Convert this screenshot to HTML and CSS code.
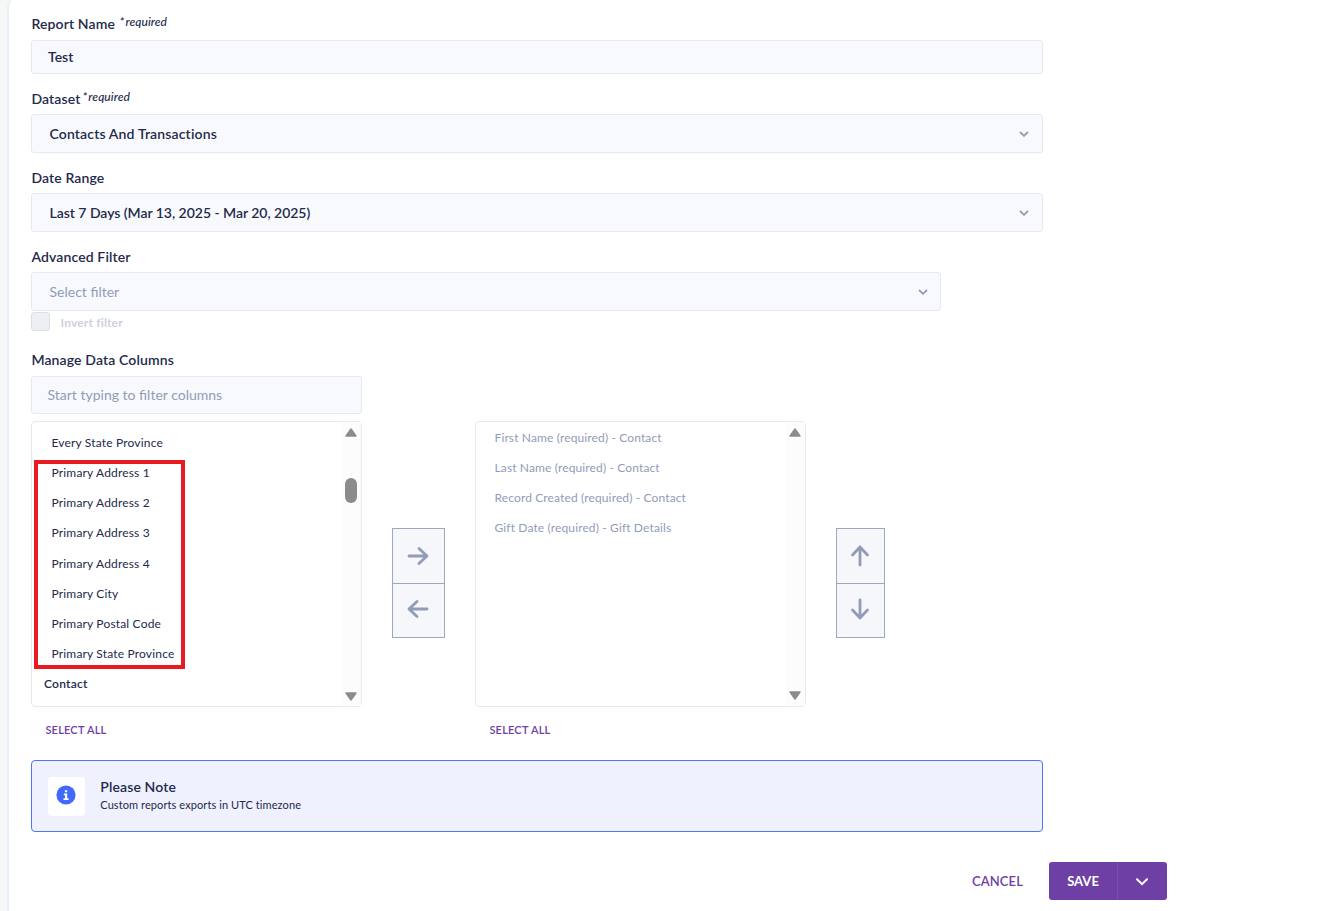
FILE: index.html
```html
<!DOCTYPE html>
<html lang="en">
<head>
  <meta charset="UTF-8" />
  <meta name="viewport" content="width=device-width, initial-scale=1.0"/>
  <title>Custom Report</title>
  <link rel="stylesheet" href="styles.css">
</head>
<body>

  <main class="card">
    <form class="report-form">

      <div class="field field-name">
        <label class="label">Report Name <em class="required spaced">*<span>required</span></em></label>
        <div class="control name-input">Test</div>
      </div>

      <div class="field">
        <label class="label">Dataset<em class="required">*<span>required</span></em></label>
        <div class="control select">
          <span class="t-dataset">Contacts And Transactions</span>
          <svg class="chevron" viewBox="0 0 10 6"><path d="M1 1l4 3.8L9 1"/></svg>
        </div>
      </div>

      <div class="field">
        <label class="label">Date Range</label>
        <div class="control select">
          <span class="t-range">Last 7 Days (Mar 13, 2025 - Mar 20, 2025)</span>
          <svg class="chevron" viewBox="0 0 10 6"><path d="M1 1l4 3.8L9 1"/></svg>
        </div>
      </div>

      <div class="field field-filter">
        <label class="label">Advanced Filter</label>
        <div class="control select placeholder">
          <span>Select filter</span>
          <svg class="chevron" viewBox="0 0 10 6"><path d="M1 1l4 3.8L9 1"/></svg>
        </div>
        <div class="invert">
          <span class="checkbox"></span>
          <span class="invert-text">Invert filter</span>
        </div>
      </div>

      <div class="field field-columns">
        <label class="label">Manage Data Columns</label>
        <div class="control search placeholder">Start typing to filter columns</div>

        <div class="picker">
          <div class="picker-col">
            <div class="list">
              <ul class="items available">
                <li>Every State Province</li>
                <li>Primary Address 1</li>
                <li>Primary Address 2</li>
                <li>Primary Address 3</li>
                <li>Primary Address 4</li>
                <li>Primary City</li>
                <li>Primary Postal Code</li>
                <li>Primary State Province</li>
                <li class="group">Contact</li>
              </ul>
              <div class="scrollbar">
                <svg class="arrow" viewBox="0 0 12 9"><path d="M6 1L11 8H1z"/></svg>
                <span class="thumb"></span>
                <svg class="arrow" viewBox="0 0 12 9"><path d="M6 8L11 1H1z"/></svg>
              </div>
              <div class="highlight"></div>
            </div>
            <a class="select-all">SELECT ALL</a>
          </div>

          <div class="move move-side">
            <button type="button"><svg viewBox="0 0 22 22"><path d="M2 11h18M12 3.5l8 7.5-8 7.5"/></svg></button>
            <button type="button"><svg viewBox="0 0 22 22"><path d="M20 11H2M10 3.5L2 11l8 7.5"/></svg></button>
          </div>

          <div class="picker-col">
            <div class="list">
              <ul class="items selected">
                <li>First Name (required) - Contact</li>
                <li>Last Name (required) - Contact</li>
                <li>Record Created (required) - Contact</li>
                <li>Gift Date (required) - Gift Details</li>
              </ul>
              <div class="scrollbar short">
                <svg class="arrow" viewBox="0 0 12 9"><path d="M6 1L11 8H1z"/></svg>
                <svg class="arrow" viewBox="0 0 12 9"><path d="M6 8L11 1H1z"/></svg>
              </div>
            </div>
            <a class="select-all">SELECT ALL</a>
          </div>

          <div class="move move-order">
            <button type="button"><svg viewBox="0 0 22 22"><path d="M11 20V2M3.5 10L11 2l7.5 8"/></svg></button>
            <button type="button"><svg viewBox="0 0 22 22"><path d="M11 2v18M3.5 12l7.5 8 7.5-8"/></svg></button>
          </div>
        </div>
      </div>

      <div class="note">
        <div class="note-icon">
          <svg viewBox="0 0 20 20">
            <circle cx="10" cy="10" r="9.6"/>
            <path d="M8.9 5.2h2.3v2.1H8.9zM7.8 8.6h3.4v4.7h1.4v1.6H7.5v-1.6h1.5v-3.1H7.8z"/>
          </svg>
        </div>
        <div class="note-body">
          <div class="note-title">Please Note</div>
          <div class="note-text">Custom reports exports in UTC timezone</div>
        </div>
      </div>
    </form>

    <div class="actions">
      <button type="button" class="cancel">CANCEL</button>
      <div class="save-group">
        <button type="button" class="save">SAVE</button>
        <button type="button" class="save-more"><svg viewBox="0 0 12 8"><path d="M1 1.3l5 4.9 5-4.9"/></svg></button>
      </div>
    </div>
  </main>

</body>
</html>
```
FILE: styles.css
```css
* {
  box-sizing: border-box;
}

body {
  margin: 0;
  height: 911px;
  overflow: hidden;
  background: #f6f8f7;
  color: #232a4a;
  font-family: Lato, "Liberation Sans", sans-serif;
  font-size: 14px;
}

button {
  margin: 0;
  padding: 0;
  border: 0;
  background: none;
  font-family: inherit;
}

.card {
  height: 930px;
  margin: -2px 0 0 7px;
  padding: 17px 0 0 22px;
  background: #fff;
  border-left: 2px solid #ecedf6;
  border-top-left-radius: 10px;
}

.report-form {
  width: 1012px;
}

.field {
  margin-bottom: 16px;
}

.label {
  display: block;
  height: 18px;
  margin-bottom: 6px;
  padding-left: 0.4px;
  line-height: 18px;
  font-weight: 600;
  letter-spacing: 0.13px;
}

.field-name .label,
.field-columns .label {
  margin-bottom: 7px;
}

.required {
  position: relative;
  top: -3px;
  margin-left: 2px;
  font-size: 12px;
  font-weight: 500;
}

.required span {
  margin-left: 1px;
  letter-spacing: 0.05px;
}

.required.spaced {
  margin-left: 1px;
}

.control {
  display: flex;
  align-items: center;
  height: 34px;
  padding: 0 13px 0 16px;
  background: #f8f9fd;
  border: 1px solid #e6e9f3;
  border-radius: 3px;
  font-weight: 600;
}

.name-input {
  padding-bottom: 2px;
}

.select {
  justify-content: space-between;
  height: 39px;
  padding-left: 17.5px;
}

.t-dataset {
  letter-spacing: 0.15px;
}

.t-range {
  letter-spacing: -0.03px;
}

.placeholder {
  color: #929cb8;
  font-weight: 400;
}

.chevron {
  width: 10px;
  height: 6px;
  margin-top: 1px;
  fill: none;
  stroke: #929cb8;
  stroke-width: 1.8;
}

/* advanced filter */
.field-filter {
  width: 910px;
  margin-bottom: 20px;
}

.field-filter .control {
  padding-right: 12.5px;
}

.invert {
  display: flex;
  align-items: center;
  gap: 10.5px;
  margin-top: 1px;
  height: 19px;
}

.checkbox {
  width: 19px;
  height: 19px;
  background: #eeeff3;
  border: 1px solid #dcdee6;
  border-radius: 3px;
}

.invert-text {
  padding-top: 1px;
  color: #cdd1de;
  font-size: 12px;
  font-weight: 700;
  letter-spacing: 0.17px;
}

/* column picker */
.field-columns {
  margin-bottom: 21px;
}

.search {
  width: 331px;
  height: 38px;
  padding: 0 0 2px 15.5px;
}

.picker {
  display: flex;
  align-items: flex-start;
  gap: 30px;
  margin-top: 7px;
}

.picker-col {
  width: 331px;
}

.list {
  position: relative;
  display: flex;
  justify-content: space-between;
  height: 286px;
  border: 1px solid #e6e9f3;
  border-radius: 4px;
}

.items {
  margin: 0;
  padding: 6px 0 0 19.5px;
  list-style: none;
  font-size: 12px;
  line-height: 30.14px;
  letter-spacing: 0.17px;
}

.items .group {
  margin-left: -7.5px;
  font-weight: 600;
  letter-spacing: 0.25px;
}

.items.selected {
  padding: 1px 0 0 18.5px;
  color: #929cb8;
  line-height: 30px;
  letter-spacing: 0.13px;
}

.scrollbar {
  position: relative;
  display: flex;
  flex-direction: column;
  justify-content: space-between;
  align-items: center;
  width: 19px;
  padding: 6px 0.5px 5px 0;
  background: #fcfcfc;
}

.scrollbar.short {
  padding: 6px 1px 6px 0;
}

.arrow {
  width: 12px;
  height: 9px;
  fill: #8b8b8b;
  stroke: #8b8b8b;
  stroke-width: 1.4;
  stroke-linejoin: round;
}

.thumb {
  position: absolute;
  top: 56px;
  left: 3.4px;
  width: 12px;
  height: 25px;
  background: #8b8b8b;
  border-radius: 6px;
}

.highlight {
  position: absolute;
  top: 38px;
  left: 2px;
  width: 151px;
  height: 209px;
  border: 4px solid #e81c20;
}

.select-all {
  display: block;
  margin-top: 14px;
  padding-left: 14.4px;
  color: #6e40a5;
  font-size: 11px;
  font-weight: 600;
  line-height: 18px;
  letter-spacing: 0.2px;
}

.move {
  display: flex;
  flex-direction: column;
  margin-top: 107px;
  border: 1px solid #9da7c0;
}

.move button {
  display: flex;
  align-items: center;
  justify-content: center;
  height: 54px;
  padding: 0 0.5px 1px 0;
  background: #f6f7fa;
}

.move button + button {
  padding-bottom: 3px;
  border-top: 1px solid #9da7c0;
}

.move svg {
  width: 22px;
  height: 22px;
  fill: none;
  stroke: #929cb8;
  stroke-width: 2.8;
  stroke-linecap: round;
  stroke-linejoin: round;
}

.move-side {
  width: 53px;
}

.move-order {
  width: 49px;
}

/* note */
.note {
  display: flex;
  align-items: center;
  gap: 15px;
  height: 72px;
  padding-left: 16px;
  background: #eff1fe;
  border: 1px solid #4f75f5;
  border-radius: 4px;
}

.note-icon {
  display: flex;
  align-items: center;
  justify-content: center;
  width: 37px;
  height: 39px;
  padding: 0 1px 3px 0;
  background: #fff;
  border-radius: 4px;
}

.note-icon svg {
  width: 20px;
  height: 20px;
}

.note-icon circle {
  fill: #4169fb;
}

.note-icon path {
  fill: #fff;
}

.note-body {
  padding: 0 0 2px 0.3px;
}

.note-title {
  font-weight: 600;
  line-height: 18px;
  letter-spacing: 0.13px;
}

.note-text {
  font-size: 11px;
  line-height: 17px;
  letter-spacing: 0.09px;
}

/* footer buttons */
.actions {
  display: flex;
  justify-content: flex-end;
  align-items: center;
  gap: 26px;
  width: 1136px;
  margin-top: 30px;
}

.cancel {
  color: #6e40a5;
  font-size: 13px;
  font-weight: 600;
  letter-spacing: 0.12px;
}

.save-group {
  display: flex;
  width: 118px;
  height: 38px;
  background: #6e40a5;
  border-radius: 3px;
}

.save {
  width: 69px;
  color: #fff;
  font-size: 13px;
  font-weight: 700;
  border-right: 1px solid #7a4fae;
}

.save-more {
  display: flex;
  align-items: center;
  justify-content: center;
  width: 49px;
  padding-right: 2px;
}

.save-more svg {
  width: 12px;
  height: 8px;
  margin-top: 2px;
  fill: none;
  stroke: #fff;
  stroke-width: 2;
  stroke-linecap: round;
}
```
